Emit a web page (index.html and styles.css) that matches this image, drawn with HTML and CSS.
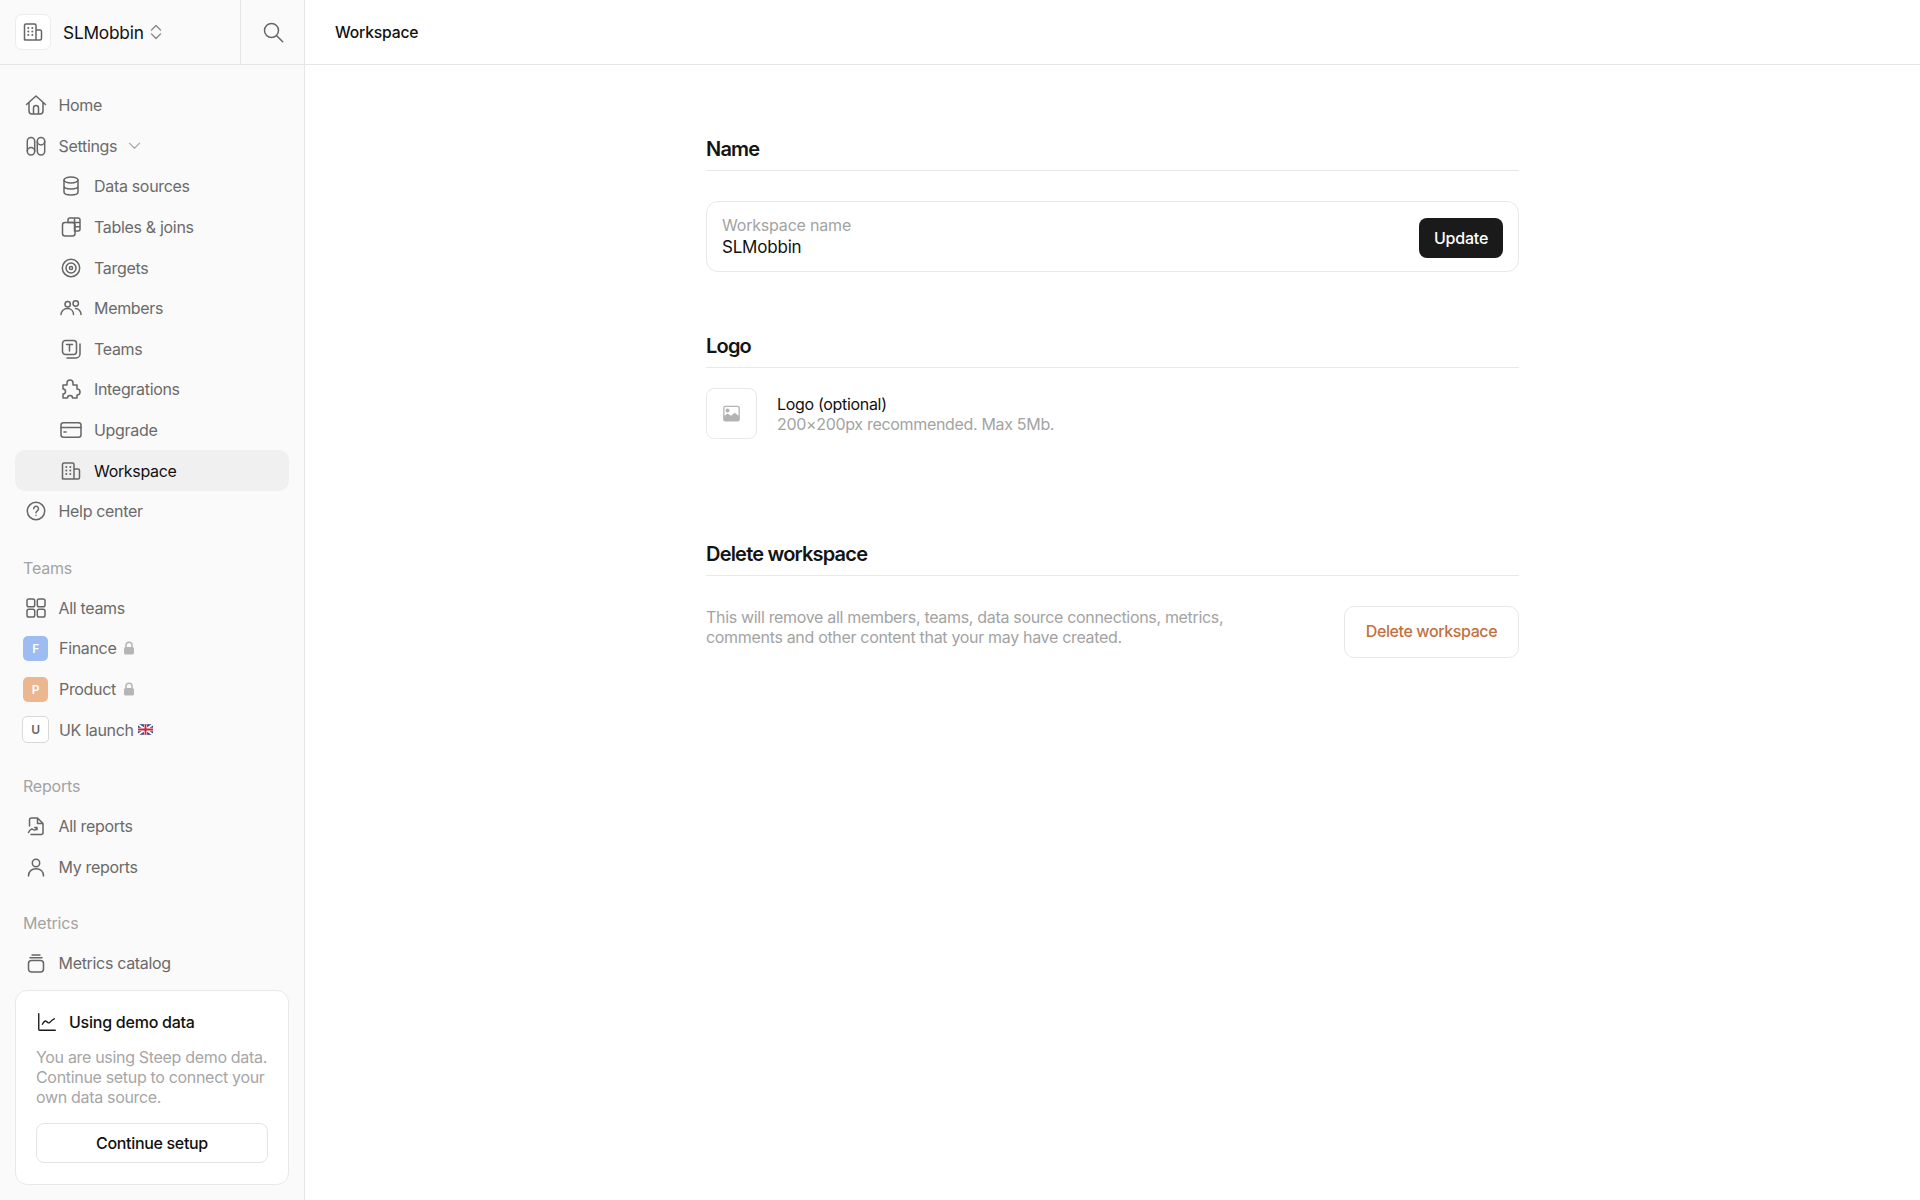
FILE: index.html
```html
<!DOCTYPE html>
<html lang="en">
<head>
<meta charset="utf-8">
<title>Workspace</title>
<link rel="stylesheet" href="styles.css">
</head>
<body>
<div class="app">
  <aside class="sidebar">
    <div class="side-head">
      <div class="switcher">
        <span class="logo-box">
          <svg class="ico" viewBox="0 0 24 24"><path d="M3.500 20V5.500A1.500 1.500 0 0 1 5 4h8.500A1.500 1.500 0 0 1 15 5.500V20M15 10h4A1.500 1.500 0 0 1 20.500 11.500V18.500A1.500 1.500 0 0 1 19 20H5A1.500 1.500 0 0 1 3.500 18.500"/><path d="M7.300 8h.01M11.300 8h.01M7.300 11.500h.01M11.300 11.500h.01M7.300 15h.01M11.300 15h.01" stroke-width="2"/></svg>
        </span>
        <span class="ws-name">SLMobbin</span>
        <svg class="updown" viewBox="0 0 14 18"><path d="M2.500 7 7 2.500 11.500 7M2.500 11 7 15.500 11.500 11"/></svg>
      </div>
      <div class="search-cell">
        <svg class="ico" viewBox="0 0 24 24"><circle cx="10.500" cy="10.500" r="7"/><path d="m15.700 15.700 6 6"/></svg>
      </div>
    </div>
    <nav class="nav">
      <a class="row"><svg class="ico" viewBox="0 0 24 24"><path d="M2.500 11.500 12 3l9.500 8.500M5 9.500V18a3 3 0 0 0 3 3h8a3 3 0 0 0 3-3V9.500M9.500 21v-6a2.500 2.500 0 0 1 5 0v6"/></svg><span>Home</span></a>
      <a class="row"><svg class="ico" viewBox="0 0 24 24"><rect x="3.300" y="3.500" width="7.400" height="17.500" rx="3.700"/><rect x="13.300" y="3.500" width="7.400" height="17.500" rx="3.700"/><path d="M3.300 17.300a3.700 3.700 0 0 1 7.400 0M13.300 7.200a3.700 3.700 0 0 0 7.400 0"/></svg><span>Settings</span><svg class="caret" viewBox="0 0 14 14"><path d="M1.500 4.500 7 10l5.500-5.500"/></svg></a>
      <a class="row sub"><svg class="ico" viewBox="0 0 24 24"><ellipse cx="12" cy="6" rx="7" ry="3"/><path d="M5 6v12c0 1.700 3.100 3 7 3s7-1.300 7-3V6M5 12c0 1.700 3.100 3 7 3s7-1.300 7-3"/></svg><span>Data sources</span></a>
      <a class="row sub"><svg class="ico" viewBox="0 0 24 24"><rect x="3.500" y="7.500" width="12.500" height="13.500" rx="2.500"/><path d="M9 7.500V5a2 2 0 0 1 2-2h8a2 2 0 0 1 2 2v9a2 2 0 0 1-2 2h-3M9 7.500h12M16 11.800h5M15.500 3v13"/></svg><span>Tables &amp; joins</span></a>
      <a class="row sub"><svg class="ico" viewBox="0 0 24 24"><circle cx="12" cy="12" r="8.700"/><circle cx="12" cy="12" r="5"/><circle cx="12" cy="12" r="1.600"/></svg><span>Targets</span></a>
      <a class="row sub"><svg class="ico" viewBox="0 0 24 24"><circle cx="8.700" cy="8.300" r="2.700"/><circle cx="16.700" cy="7.500" r="2.700"/><path d="M2 18.500c0-3.500 3-6 6.500-6s6 2.500 6 6M16.500 12.500c3 0 5.500 2.500 5.500 6"/></svg><span>Members</span></a>
      <a class="row sub"><svg class="ico" viewBox="0 0 24 24"><rect x="3.500" y="3.500" width="14" height="14" rx="3"/><path d="M7.500 7.500h6M10.500 7.500v6.500M21 7v10a4 4 0 0 1-4 4H8"/></svg><span>Teams</span></a>
      <a class="row sub"><svg class="ico" viewBox="0 0 24 24"><path d="M4 8h4V6a3 3 0 0 1 6 0v2h4v4a3 3 0 0 1 0 6v3h-4.500a2.500 2.500 0 0 0-5 0H4v-4a2.500 2.500 0 0 0 0-5z"/></svg><span>Integrations</span></a>
      <a class="row sub"><svg class="ico" viewBox="0 0 24 24"><rect x="2" y="4.800" width="20" height="14.400" rx="2.500"/><path d="M2 9.500h20M5 14h2" /></svg><span>Upgrade</span></a>
      <a class="row sub active"><svg class="ico" viewBox="0 0 24 24"><path d="M3.500 20V5.500A1.500 1.500 0 0 1 5 4h8.500A1.500 1.500 0 0 1 15 5.500V20M15 10h4A1.500 1.500 0 0 1 20.500 11.500V18.500A1.500 1.500 0 0 1 19 20H5A1.500 1.500 0 0 1 3.500 18.500V16"/><path d="M7.300 8h.01M11.300 8h.01M7.300 11.500h.01M11.300 11.500h.01M7.300 15h.01M11.300 15h.01" stroke-width="2"/></svg><span>Workspace</span></a>
      <a class="row"><svg class="ico" viewBox="0 0 24 24"><circle cx="12" cy="12" r="8.700"/><path d="M9.700 9.700a2.400 2.400 0 1 1 3.600 2.100c-.8.500-1.300 1-1.300 2M12 16.300h.01"/></svg><span>Help center</span></a>

      <div class="label">Teams</div>
      <a class="row"><svg class="ico" viewBox="0 0 24 24"><rect x="3" y="3" width="7.700" height="7.700" rx="1.800"/><rect x="13.300" y="3" width="7.700" height="7.700" rx="1.800"/><rect x="3" y="13.300" width="7.700" height="7.700" rx="1.800"/><rect x="13.300" y="13.300" width="7.700" height="7.700" rx="1.800"/></svg><span>All teams</span></a>
      <a class="row"><span class="badge blue">F</span><span>Finance</span><svg class="lock" viewBox="0 0 12 14"><path d="M3 6V4.200a3 3 0 0 1 6 0V6" class="shackle"/><rect x="1" y="6" width="10" height="7.500" rx="1.500"/></svg></a>
      <a class="row"><span class="badge orange">P</span><span>Product</span><svg class="lock" viewBox="0 0 12 14"><path d="M3 6V4.200a3 3 0 0 1 6 0V6" class="shackle"/><rect x="1" y="6" width="10" height="7.500" rx="1.500"/></svg></a>
      <a class="row"><span class="badge outline">U</span><span>UK launch</span><svg class="flag" viewBox="0 0 16 11"><rect width="16" height="11" rx="1.500" fill="#2b3f86"/><path d="M0 0l16 11M16 0 0 11" stroke="#fff" stroke-width="2"/><path d="M8 0v11M0 5.500h16" stroke="#fff" stroke-width="3.500"/><path d="M8 0v11M0 5.500h16" stroke="#c8283c" stroke-width="2"/></svg></a>

      <div class="label">Reports</div>
      <a class="row"><svg class="ico" viewBox="0 0 24 24"><path d="M5.500 12V6a2 2 0 0 1 2-2h6L19 9.500v9a2 2 0 0 1-2 2H7M13.500 4v5.500H19"/><path d="M4.500 18.500c1.500-3 3-4 4.500-3 1.500 1 2.500 1 4-2m0 0v2.300m0-2.300h-2.300"/></svg><span>All reports</span></a>
      <a class="row"><svg class="ico" viewBox="0 0 24 24"><circle cx="12" cy="8" r="3.700"/><path d="M4.500 21c0-4.700 3.200-7.300 7.500-7.300s7.500 2.600 7.500 7.300"/></svg><span>My reports</span></a>

      <div class="label">Metrics</div>
      <a class="row"><svg class="ico" viewBox="0 0 24 24"><rect x="4.500" y="9.500" width="15" height="11.500" rx="3"/><path d="M8 4h8M6 6.800h12"/></svg><span>Metrics catalog</span></a>
    </nav>
    <div class="demo">
      <div class="demo-title"><svg class="ico dark" viewBox="0 0 24 24"><path d="M3 3v17a1 1 0 0 0 1 1h17M7 14.500c1.500-3 3-4.500 4.500-3s2.500 2 3.500 1 2.500-3 5-4"/></svg><span>Using demo data</span></div>
      <p class="demo-text">You are using Steep demo data. Continue setup to connect your own data source.</p>
      <button class="demo-btn">Continue setup</button>
    </div>
  </aside>
  <main class="main">
    <header class="top">Workspace</header>
    <div class="content">
      <h2 class="heading">Name</h2>
      <div class="field">
        <div class="field-body">
          <div class="field-label">Workspace name</div>
          <div class="field-value">SLMobbin</div>
        </div>
        <button class="update">Update</button>
      </div>
      <h2 class="heading logo-head">Logo</h2>
      <div class="logo-row">
        <span class="logo-drop">
          <svg viewBox="0 0 24 24" class="pic"><path fill-rule="evenodd" d="M5 3h14a2.500 2.500 0 0 1 2.500 2.500v13A2.500 2.500 0 0 1 19 21H5a2.500 2.500 0 0 1-2.500-2.500v-13A2.500 2.500 0 0 1 5 3zm2.500 3.200a2.300 2.300 0 1 0 0 4.600 2.300 2.300 0 0 0 0-4.600zM4 5.500v9l3.500-2.500 4 2.500 4-3.500 4.500 3.500v-9c0-.6-.4-1-1-1H5c-.6 0-1 .4-1 1z"/></svg>
        </span>
        <div>
          <div class="logo-title">Logo (optional)</div>
          <div class="logo-sub">200×200px recommended. Max 5Mb.</div>
        </div>
      </div>
      <h2 class="heading del-head">Delete workspace</h2>
      <div class="del-row">
        <p class="del-text">This will remove all members, teams, data source connections, metrics, comments and other content that your may have created.</p>
        <button class="del-btn">Delete workspace</button>
      </div>
    </div>
  </main>
</div>
</body>
</html>
```
FILE: styles.css
```css
* { box-sizing: border-box; }
html, body { margin: 0; height: 100%; }
body {
  font-family: Inter, "Liberation Sans", sans-serif;
  font-size: 16px;
  letter-spacing: -0.02em;
  color: #111;
  background: #fff;
}
.app { display: flex; height: 1200px; overflow: hidden; }
.ico {
  width: 24px; height: 24px; flex: none;
  fill: none; stroke: #666; stroke-width: 1.5;
  stroke-linecap: round; stroke-linejoin: round;
}
.ico.dark { stroke: #1a1a1a; }

.sidebar {
  width: 305px; flex: none;
  display: flex; flex-direction: column;
  background: #fafafa;
  border-right: 1px solid #e6e6e6;
}
.side-head { display: flex; height: 65px; flex: none; border-bottom: 1px solid #e6e6e6; }
.switcher {
  width: 241px; flex: none;
  display: flex; align-items: center;
  padding-left: 15px;
  border-right: 1px solid #e6e6e6;
}
.logo-box {
  width: 36px; height: 36px;
  display: flex; align-items: center; justify-content: center;
  background: #fff; border: 1px solid #ececec; border-radius: 7px;
}
.ws-name { margin-left: 12px; font-size: 17.300px; font-weight: 420; letter-spacing: -0.012em; color: #111; }
.updown { width: 14px; height: 18px; margin-left: 5px; fill: none; stroke: #8a8a8a; stroke-width: 1.4; stroke-linecap: round; stroke-linejoin: round; }
.search-cell { flex: 1; display: flex; align-items: center; justify-content: center; }

.nav { padding: 20px 15px 0; display: flex; flex-direction: column; }
.row {
  height: 40.6px; flex: none;
  display: flex; align-items: center; gap: 11px;
  padding-left: 8.500px;
  color: #6a6a6a;
  border-radius: 10px;
}
.row.sub { padding-left: 44px; }
.row.active { background: #f0f0f0; color: #111; }
.caret { width: 13px; height: 13px; margin-left: 0; fill: none; stroke: #a8a8a8; stroke-width: 1.3; stroke-linecap: round; stroke-linejoin: round; }
.label { height: 20px; line-height: 20px; margin: 26px 0 10px; padding-left: 8px; color: #a3a3a3; letter-spacing: -0.012em; }

.badge {
  width: 25px; height: 25px; margin-left: -0.500px; flex: none;
  display: flex; align-items: center; justify-content: center;
  border-radius: 5px;
  font-size: 12px; font-weight: 600;
  color: #fff;
}
.blue { background: #9dbcf2; }
.orange { background: #ecb78f; }
.outline { width: 27px; height: 27px; margin-left: -1.500px; margin-right: -1px; background: #fff; border: 1px solid #d8d8d8; color: #666; }
.lock { width: 12px; height: 14px; margin-left: -4px; fill: #b5b5b5; }
.shackle { fill: none; stroke: #b5b5b5; stroke-width: 1.5; }
.flag { width: 15px; height: 11px; margin-left: -7px; }

.demo {
  margin: auto 15px 15px;
  height: 195px; flex: none;
  padding: 19px 20px 20px;
  background: #fff;
  border: 1px solid #e8e8e8;
  border-radius: 12px;
}
.demo-title { display: flex; align-items: center; gap: 11px; height: 24px; font-weight: 550; color: #111; letter-spacing: -0.015em; }
.demo-title .ico { width: 22px; height: 22px; }
.demo-text { margin: 13px -3px 0 0; line-height: 20px; color: #a6a6a6; }
.demo-btn {
  display: block; width: 100%; height: 40px; margin-top: 16px;
  font: inherit; letter-spacing: inherit; font-weight: 450; color: #111;
  background: #fff; border: 1px solid #e4e4e4; border-radius: 8px;
}

.main { flex: 1; min-width: 0; }
.top {
  height: 65px; padding-left: 30px;
  display: flex; align-items: center;
  border-bottom: 1px solid #e6e6e6;
  font-weight: 500; color: #111; font-size: 15.700px; letter-spacing: -0.012em;
}
.content { width: 813px; margin: 0 auto; padding-top: 70px; }
.heading {
  margin: 0; height: 36px;
  line-height: 28px; font-size: 20px; font-weight: 600;
  letter-spacing: -0.04em;
  color: #141414;
  border-bottom: 1px solid #e8e8e8;
}
.field {
  margin-top: 30px; height: 71px;
  display: flex; align-items: center; justify-content: space-between;
  padding: 0 15px;
  border: 1px solid #e8e8e8; border-radius: 12px;
}
.field-body { margin-top: -1px; }
.field-label { line-height: 21px; color: #a3a3a3; margin-bottom: 1px; letter-spacing: -0.012em; }
.field-value { line-height: 21px; color: #111; font-size: 17px; letter-spacing: -0.012em; }
.update {
  width: 84px; height: 40px; margin-top: 2px;
  font: inherit; letter-spacing: -0.012em; font-weight: 500;
  color: #fff; background: #1a1a1a; border: none; border-radius: 8px;
}
.logo-head { margin-top: 60px; }
.logo-row { margin-top: 20px; display: flex; align-items: center; gap: 20px; }
.logo-drop {
  width: 51px; height: 51px; flex: none;
  display: flex; align-items: center; justify-content: center;
  border: 1px solid #e8e8e8; border-radius: 8px;
}
.pic { width: 21px; height: 21px; fill: #b3b3b3; }
.logo-title { line-height: 20px; color: #111; }
.logo-sub { line-height: 20px; color: #a3a3a3; }
.del-head { margin-top: 101px; }
.del-row { margin-top: 31px; display: flex; justify-content: space-between; align-items: flex-start; }
.del-text { margin: 0; width: 540px; line-height: 20px; color: #a3a3a3; }
.del-btn {
  width: 175px; height: 52px; margin-top: -1px; padding-bottom: 3px;
  font: inherit; letter-spacing: -0.025em; font-weight: 450;
  color: #c2703f; background: #fff; border: 1px solid #e8e8e8; border-radius: 10px;
}
```
